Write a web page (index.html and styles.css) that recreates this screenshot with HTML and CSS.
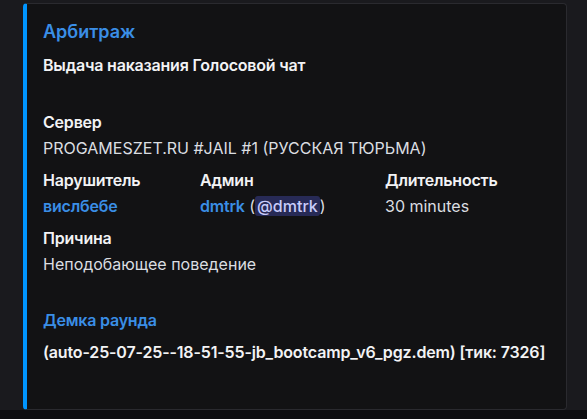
FILE: index.html
```html
<!DOCTYPE html>
<html lang="ru">
<head>
<meta charset="utf-8">
<link rel="stylesheet" href="styles.css">
</head>
<body>
<div class="chat">
  <article class="embed">
    <div class="title">Арбитраж</div>
    <div class="desc">Выдача наказания Голосовой чат</div>
    <div class="fields">
      <div class="field full">
        <div class="fname">Сервер</div>
        <div class="fvalue">PROGAMESZET.RU #JAIL #1 (РУССКАЯ ТЮРЬМА)</div>
      </div>
      <div class="field">
        <div class="fname">Нарушитель</div>
        <div class="fvalue"><span class="link">вислбебе</span></div>
      </div>
      <div class="field">
        <div class="fname">Админ</div>
        <div class="fvalue"><span class="link">dmtrk</span> (<span class="mention">@dmtrk</span>)</div>
      </div>
      <div class="field">
        <div class="fname">Длительность</div>
        <div class="fvalue">30 minutes</div>
      </div>
      <div class="field full">
        <div class="fname">Причина</div>
        <div class="fvalue">Неподобающее поведение</div>
      </div>
    </div>
    <div class="demo">
      <div class="demo-name">Демка раунда</div>
      <div class="demo-value">(auto-25-07-25--18-51-55-jb_bootcamp_v6_pgz.dem) [тик: 7326]</div>
    </div>
  </article>
</div>
</body>
</html>
```
FILE: styles.css
```css
html, body {
  margin: 0;
  padding: 0;
}
body {
  background: #0e0e10;
  font-family: Inter, "Noto Sans", sans-serif;
  font-size: 16px;
  color: #dbdee1;
}
.chat {
  height: 410px;
  box-sizing: border-box;
  padding: 3px 0 0 23px;
  background: #1a1a1e;
}
.embed {
  box-sizing: border-box;
  width: 544px;
  height: 407px;
  background: #121214;
  border: 1px solid #2a2a2f;
  border-left: 4px solid #0095ff;
  border-radius: 4px;
  padding: 16px 16px 0 16px;
}
.title {
  font-size: 18px;
  line-height: 24px;
  font-weight: 600;
  color: #3a8ee6;
}
.desc {
  margin-top: 10px;
  font-weight: 600;
  letter-spacing: -0.2px;
  line-height: 22px;
  color: #f2f3f5;
}
.fields {
  margin-top: 35px;
  display: grid;
  grid-template-columns: 157px 185px 1fr;
  row-gap: 10px;
}
.field.full {
  grid-column: 1 / -1;
}
.fname {
  font-weight: 600;
  letter-spacing: -0.2px;
  line-height: 22px;
  color: #f2f3f5;
  margin-bottom: 4px;
}
.fvalue {
  line-height: 22px;
  color: #dbdee1;
}
.link {
  color: #3a8ee6;
  font-weight: 600;
  letter-spacing: -0.2px;
}
.mention {
  background: rgba(88, 101, 242, 0.3);
  color: #c9cdfb;
  border-radius: 3px;
  padding: 0 2px;
  font-weight: 500;
}
.demo {
  margin-top: 34px;
}
.demo-name {
  font-weight: 600;
  letter-spacing: -0.2px;
  line-height: 22px;
  color: #3a8ee6;
}
.demo-value {
  margin-top: 10px;
  font-weight: 600;
  letter-spacing: -0.15px;
  line-height: 22px;
  color: #f2f3f5;
}
```
